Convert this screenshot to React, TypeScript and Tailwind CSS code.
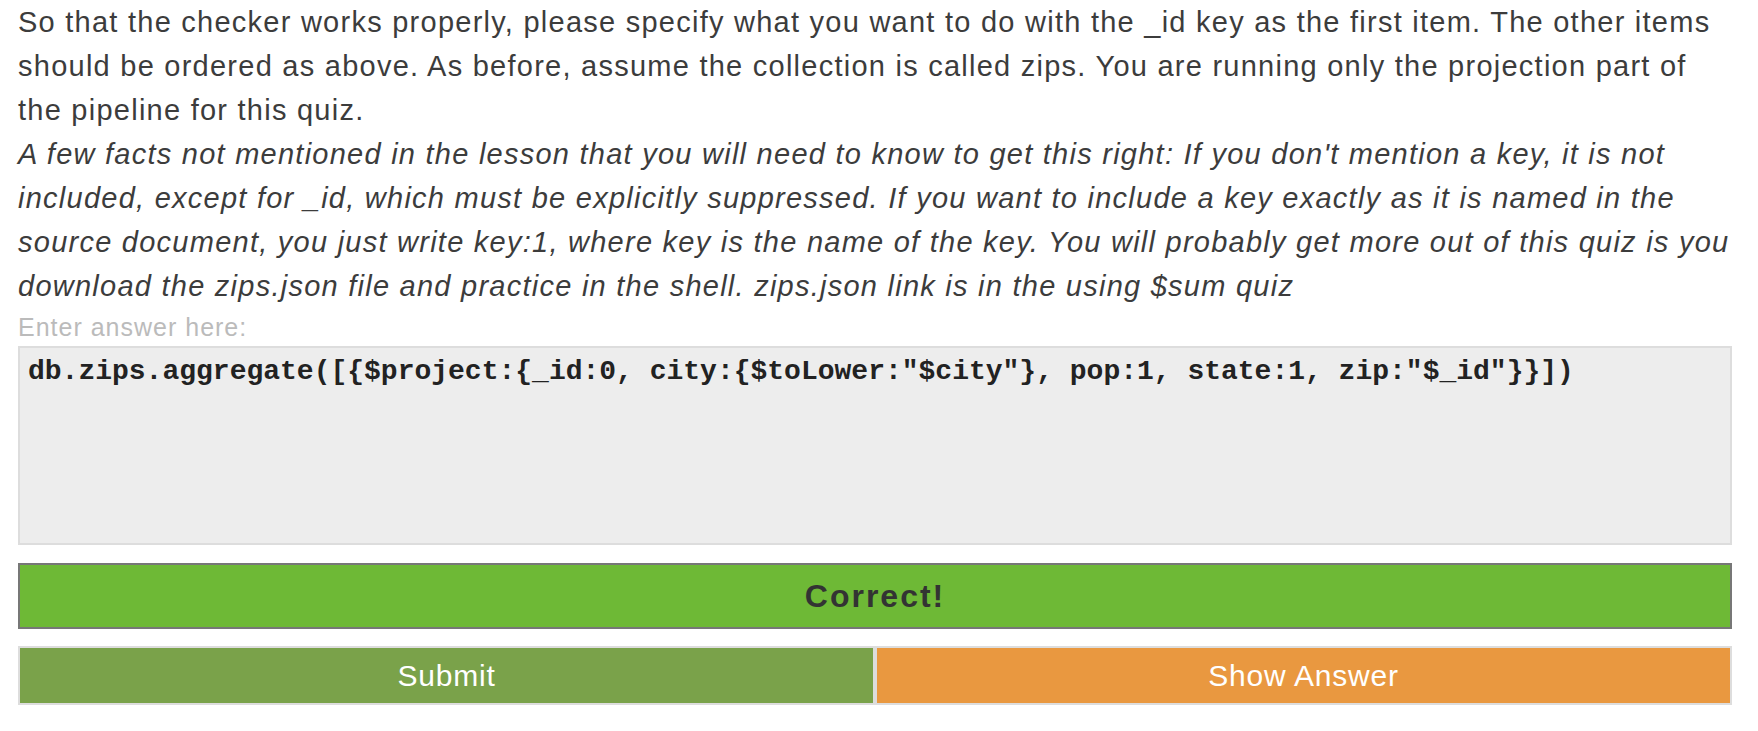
export default function App() {
  const code =
    'db.zips.aggregate([{$project:{_id:0, city:{$toLower:"$city"}, pop:1, state:1, zip:"$_id"}}])';

  return (
    <div className="min-h-screen bg-white pl-[18px] pr-[26px] font-['Liberation_Sans',Arial,sans-serif] text-[#333]">
      {/* Question text */}
      <div className="-mr-[4px] text-[29px] font-light leading-[44px] tracking-[1.25px] text-[#3c3c3c]">
        <p>
          So that the checker works properly, please specify what you want to do with the _id key as the first
          item. The other items should be ordered as above. As before, assume the collection is called zips. You
          are running only the projection part of the pipeline for this quiz.
        </p>
        <p className="italic">
          A few facts not mentioned in the lesson that you will need to know to get this right: If you don't
          mention a key, it is not included, except for _id, which must be explicitly suppressed. If you want to
          include a key exactly as it is named in the source document, you just write key:1, where key is the
          name of the key. You will probably get more out of this quiz is you download the zips.json file and
          practice in the shell. zips.json link is in the using $sum quiz
        </p>
      </div>

      {/* Answer */}
      <div className="pt-[3px] text-[25px] leading-[33px] tracking-[1px] text-[#bbb]">Enter answer here:</div>
      <div className="mt-[2px] h-[199px] border-2 border-[#ddd] bg-[#ededed] px-[8px] py-[6px] font-['Liberation_Mono','Courier_New',monospace] text-[28px] font-bold leading-[36px] text-[#222]">
        {code}
      </div>

      {/* Result */}
      <div className="mt-[18px] flex h-[66px] items-center justify-center border-2 border-[#777] bg-[#6eb936] text-[32px] font-bold tracking-[2px] text-[#333]">
        Correct!
      </div>

      {/* Buttons */}
      <div className="mt-[17px] flex">
        <button className="flex h-[59px] flex-1 items-center justify-center border-2 border-[#ddd] bg-[#7aa24a] text-[30px] tracking-[0.8px] text-white">
          Submit
        </button>
        <button className="flex h-[59px] flex-1 items-center justify-center border-2 border-[#ddd] bg-[#e99840] text-[30px] tracking-[0.8px] text-white">
          Show Answer
        </button>
      </div>
    </div>
  );
}
